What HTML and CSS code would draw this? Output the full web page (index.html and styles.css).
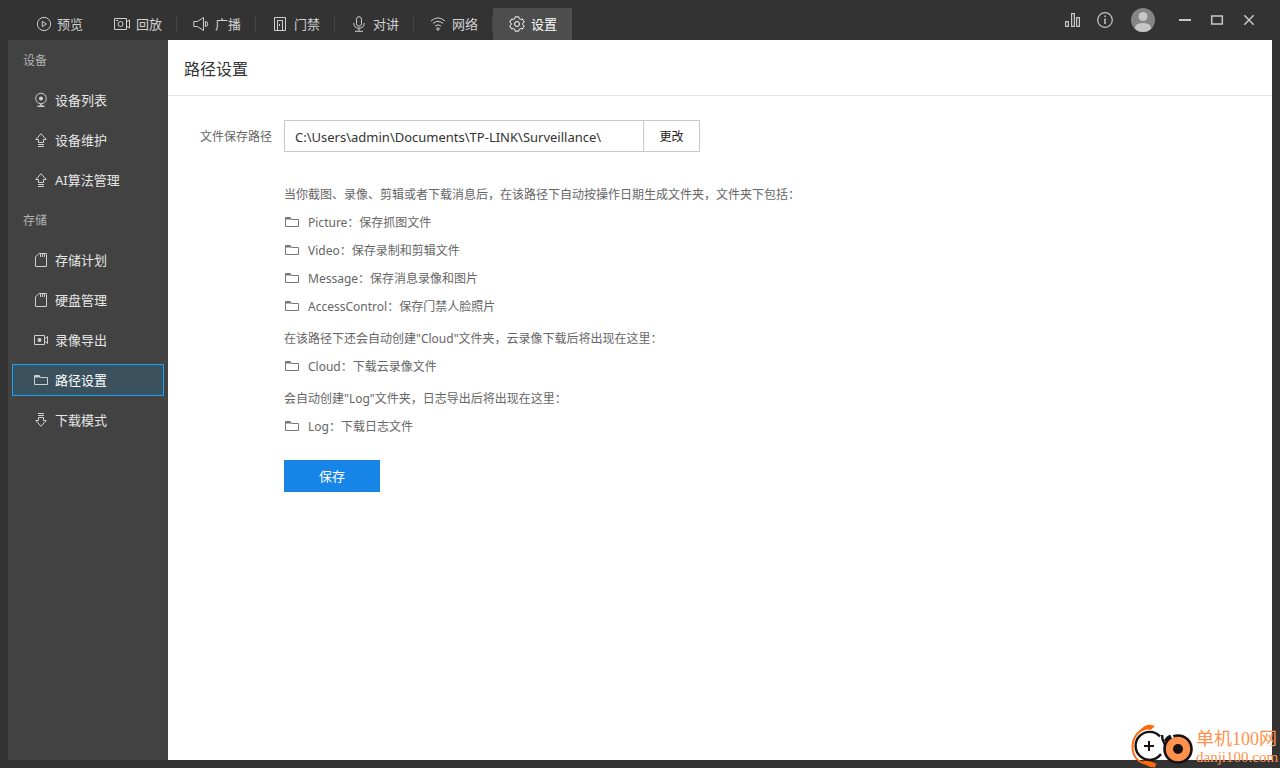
FILE: index.html
```html
<!DOCTYPE html>
<html lang="zh-CN">
<head>
<meta charset="utf-8">
<title>路径设置</title>
<link rel="stylesheet" href="styles.css">
</head>
<body>
<svg class="sprite" aria-hidden="true">
  <symbol id="folder" viewBox="0 0 16 16"><path d="M1.5 4V12.5H14.5V5.5H7.5L6 3.5H1.5Z"/><path d="M1.5 4.5H7" stroke-width="2"/></symbol>
  <symbol id="upgrade" viewBox="0 0 16 16"><path d="M8 1.7L13.2 7.5H10.5V10.5H5.5V7.5H2.8ZM5 12.5H11M5 14.5H11"/></symbol>
  <symbol id="card" viewBox="0 0 16 16"><path d="M6 1.5H13.5V14.5H2.5V5ZM7.5 2V5M9.5 2V5M11.5 2V5"/></symbol>
</svg>
<div class="app">
  <header class="topbar">
    <nav class="tabs">
      <a class="tab plain" href="#"><svg class="icon" viewBox="0 0 16 16"><circle cx="9" cy="8" r="6.6"/><path d="M7.3 5.3L11.3 8L7.3 10.7Z"/></svg>预览</a>
      <a class="tab" href="#"><svg class="icon" viewBox="0 0 16 16"><path d="M.5 2.5H12.5V13.5H.5ZM12.5 6L15.5 4V12L12.5 10M2 4.5H4"/><circle cx="6.5" cy="8" r="2.5"/></svg>回放</a>
      <a class="tab" href="#"><svg class="icon" viewBox="0 0 16 16"><path d="M.8 5.5H4.5L10.5 1.5V14.5L4.5 10.5H.8ZM12.5 5.5Q14.8 5.8 14.8 8T12.5 10.5Z"/></svg>广播</a>
      <a class="tab" href="#"><svg class="icon" viewBox="0 0 16 16"><path d="M2.5 1.5H13.5V14.5H2.5ZM5.5 14V4.5H10.5V14M7.5 8V10"/></svg>门禁</a>
      <a class="tab" href="#"><svg class="icon" viewBox="0 0 16 16"><rect x="5.5" y=".7" width="5" height="9.5" rx="2.5"/><path d="M2.8 7Q2.8 12.2 8 12.2T13.2 7M8 12V15M4 15.3H12"/></svg>对讲</a>
      <a class="tab" href="#"><svg class="icon" viewBox="0 0 16 16"><path d="M1 5Q8-1.2 15 5M3 7.5Q8 3.2 13 7.5M5 10Q8 7.5 11 10"/><circle cx="8" cy="13" r="1.2"/></svg>网络</a>
      <a class="tab active" href="#" aria-current="page"><svg class="icon" viewBox="0 0 16 16"><path d="M6.3 .8H9.7L10.4 2.8L11.4 3.4L13.4 3L15.2 5.9L13.8 7.4V8.6L15.2 10.1L13.4 13L11.4 12.6L10.4 13.2L9.7 15.2H6.3L5.6 13.2L4.6 12.6L2.6 13L.8 10.1L2.2 8.6V7.4L.8 5.9L2.6 3L4.6 3.4L5.6 2.8Z" stroke-linejoin="round"/><circle cx="8" cy="8" r="2.5"/></svg>设置</a>
    </nav>
    <div class="tools">
      <button class="tool" aria-label="统计"><svg class="icon" viewBox="0 0 16 16"><path d="M.6 9.6H3.4V14.4H.6ZM6.6 1.6H9.4V14.4H6.6ZM11.6 5.6H14.4V14.4H11.6Z" stroke-width="1.2"/></svg></button>
      <button class="tool" aria-label="信息"><svg class="icon" viewBox="0 0 16 16"><circle cx="8" cy="8" r="7.3" stroke-width="1.2"/><path d="M8 6.5V12M8 3.5V5" stroke-width="1.5"/></svg></button>
      <button class="tool user" aria-label="用户"><svg class="avatar" viewBox="0 0 24 24"><circle cx="12" cy="12" r="12" fill="#858585"/><circle cx="12" cy="8.5" r="4.5" fill="#c6c6c6"/><path d="M3.5 20.4Q5 15 12 15T20.5 20.4A12 12 0 0 1 3.5 20.4Z" fill="#c6c6c6"/></svg></button>
      <button class="tool" aria-label="最小化"><svg class="icon" viewBox="0 0 16 16"><path d="M2 8H14" stroke-width="2"/></svg></button>
      <button class="tool" aria-label="最大化"><svg class="icon" viewBox="0 0 16 16"><path d="M2.7 4H13.3V12H2.7Z" stroke-width="1.5"/></svg></button>
      <button class="tool" aria-label="关闭"><svg class="icon" viewBox="0 0 16 16"><path d="M3.3 3.3L12.7 12.7M12.7 3.3L3.3 12.7" stroke-width="1.5"/></svg></button>
    </div>
  </header>
  <div class="body">
    <nav class="sidebar">
      <h2 class="group">设备</h2>
      <a class="item" href="#"><svg class="icon" viewBox="0 0 16 16"><circle cx="8" cy="6.5" r="5.3"/><circle cx="8" cy="6.5" r="2" fill="currentColor" stroke="none"/><path d="M8 12V14M4.5 14.3H11.5" stroke-width="1.5"/></svg>设备列表</a>
      <a class="item" href="#"><svg class="icon"><use href="#upgrade"/></svg>设备维护</a>
      <a class="item" href="#"><svg class="icon"><use href="#upgrade"/></svg>AI算法管理</a>
      <h2 class="group">存储</h2>
      <a class="item" href="#"><svg class="icon"><use href="#card"/></svg>存储计划</a>
      <a class="item" href="#"><svg class="icon"><use href="#card"/></svg>硬盘管理</a>
      <a class="item" href="#"><svg class="icon" viewBox="0 0 16 16"><path d="M1.5 3.5H11.5V12.5H1.5ZM11.5 7L14.5 4.5V11.5L11.5 9"/><circle cx="6.5" cy="8" r="2" fill="currentColor" stroke="none"/></svg>录像导出</a>
      <a class="item active" href="#" aria-current="page"><svg class="icon"><use href="#folder"/></svg>路径设置</a>
      <a class="item" href="#"><svg class="icon" viewBox="0 0 16 16"><path d="M5 1.5H11M5 3.5H11M5.5 5.5H10.5V8.5H13.2L8 14.3L2.8 8.5H5.5Z"/></svg>下载模式</a>
    </nav>
    <main class="content">
      <h1 class="title">路径设置</h1>
      <form class="form">
        <label class="label" for="path">文件保存路径</label>
        <div class="path">
          <input class="field" id="path" type="text" value="C:\Users\admin\Documents\TP-LINK\Surveillance\">
          <button class="change" type="button">更改</button>
        </div>
        <div class="notes">
          <section>
            <p>当你截图、录像、剪辑或者下载消息后，在该路径下自动按操作日期生成文件夹，文件夹下包括：</p>
            <ul>
              <li><svg class="icon"><use href="#folder"/></svg>Picture：保存抓图文件</li>
              <li><svg class="icon"><use href="#folder"/></svg>Video：保存录制和剪辑文件</li>
              <li><svg class="icon"><use href="#folder"/></svg>Message：保存消息录像和图片</li>
              <li><svg class="icon"><use href="#folder"/></svg>AccessControl：保存门禁人脸照片</li>
            </ul>
          </section>
          <section>
            <p>在该路径下还会自动创建"Cloud"文件夹，云录像下载后将出现在这里：</p>
            <ul><li><svg class="icon"><use href="#folder"/></svg>Cloud：下载云录像文件</li></ul>
          </section>
          <section>
            <p>会自动创建"Log"文件夹，日志导出后将出现在这里：</p>
            <ul><li><svg class="icon"><use href="#folder"/></svg>Log：下载日志文件</li></ul>
          </section>
        </div>
        <button class="save" type="button">保存</button>
      </form>
    </main>
  </div>
</div>
<div class="watermark">
  <svg class="mark" viewBox="0 0 64 44" fill="none">
    <path d="M24 3C16-1 12 6 9 8C1 15 1 27 6 34C12 42 18 38 25 43" stroke="#ff6a0a" stroke-width="2"/>
    <path d="M12 5Q18-1 23 3L21 6Q16 4 9 9ZM12 37Q18 36 27 40Q23 45 18 42Z" fill="#ff6a0a"/>
    <circle cx="19" cy="22" r="14" fill="#fff"/>
    <path d="M30 12.5A14 14 0 1 0 31 30" stroke="#161214" stroke-width="2.4"/>
    <path d="M19 17V27M14 22H24" stroke="#161214" stroke-width="2"/>
    <path d="M32 11Q32 16 35 21M35 17Q37 13 41 11.5" stroke="#161214" stroke-width="2.4"/>
    <circle cx="48" cy="25" r="13.5" fill="#ff914d" stroke="#161214" stroke-width="2.6"/>
    <circle cx="48" cy="25" r="5" fill="#161214"/>
    <path d="M41 10L43 14" stroke="#fff" stroke-width="2"/>
  </svg>
  <div class="brand"><span class="brand-name">单机100网</span><span class="brand-site">danji100.com</span></div>
</div>
</body>
</html>
```
FILE: styles.css
```css
* {
  box-sizing: border-box;
}

body {
  margin: 0;
  background: #333;
  color: #333;
  font: 13px/20px "Noto Sans", "Noto Sans CJK SC", sans-serif;
}

a {
  color: inherit;
  text-decoration: none;
}

button,
input {
  font: inherit;
}

h1, h2, p, ul {
  margin: 0;
  padding: 0;
  font-weight: 400;
}

.sprite {
  display: none;
}

.icon {
  flex: none;
  width: 16px;
  height: 16px;
  fill: none;
  stroke: currentColor;
}

.app {
  display: flex;
  flex-direction: column;
  min-height: 100vh;
  padding: 0 8px 8px;
}

.topbar {
  display: flex;
  justify-content: space-between;
  height: 40px;
  color: #d0d0d0;
}

.tabs {
  display: flex;
  padding: 8px 0 0 11px;
}

.tab {
  display: flex;
  align-items: center;
  gap: 6px;
  padding: 0 15px 0 16px;
  background: linear-gradient(#444, #444) right center / 1px 16px no-repeat;
  white-space: nowrap;
}

.tab.plain {
  background: none;
}

.tab.active {
  background: #4d4d4d;
  color: #fff;
}

.tools {
  display: flex;
  align-items: center;
  padding-right: 7px;
}

.tool {
  display: flex;
  align-items: center;
  justify-content: center;
  width: 32px;
  height: 32px;
  padding: 0;
  border: 0;
  background: none;
  color: #c8c8c8;
}

.tool.user {
  width: 48px;
  padding-right: 4px;
}

.avatar {
  width: 24px;
  height: 24px;
}

.body {
  display: flex;
  flex: 1;
}

.sidebar {
  flex: none;
  width: 160px;
  padding: 0 4px;
  background: #424242;
  color: #e6e6e6;
}

.sidebar .icon {
  color: #d0d0d0;
}

.group {
  padding: 2px 0 0 11px;
  color: #b3b3b3;
  font-size: 12px;
  line-height: 38px;
}

.item {
  display: flex;
  align-items: center;
  gap: 6px;
  height: 32px;
  margin: 4px 0 8px;
  padding-left: 20px;
  border: 1px solid transparent;
}

.item + .group {
  margin-top: -4px;
}

.item.active {
  border-color: #12a5f4;
  background: #3b515d;
  color: #fff;
}

.content {
  flex: 1;
  background: #fff;
}

.title {
  padding: 4px 16px 0;
  border-bottom: 1px solid #e6e6e6;
  font-size: 16px;
  line-height: 51px;
}

.form {
  display: grid;
  grid-template-columns: auto 1fr;
  column-gap: 12px;
  align-items: center;
  padding: 24px 32px;
}

.label {
  padding-top: 2px;
  color: #666;
  font-size: 12px;
}

.path {
  display: flex;
  height: 32px;
}

.field {
  width: 360px;
  padding: 2px 10px 0;
  border: 1px solid #c8c8c8;
  border-radius: 0;
  background: #fff;
  color: #333;
}

.change {
  width: 57px;
  margin-left: -1px;
  padding: 2px 0 0;
  border: 1px solid #c8c8c8;
  background: #fff;
  color: #222;
  font-size: 12px;
}

.notes {
  display: grid;
  grid-column: 2;
  gap: 4px;
  margin: 29px 0 19px;
  color: #666;
  font-size: 12px;
  line-height: 28px;
}

.notes li {
  display: flex;
  align-items: center;
  gap: 8px;
}

.notes .icon {
  margin-bottom: 2px;
  color: #777;
}

.save {
  grid-column: 2;
  width: 96px;
  height: 32px;
  padding: 0;
  border: 0;
  background: #1785e8;
  color: #fff;
}

.watermark {
  position: absolute;
  right: 4px;
  bottom: 0;
  display: flex;
  align-items: center;
  gap: 2px;
  color: #ff914d;
}

.mark {
  width: 64px;
  height: 44px;
}

.brand {
  display: flex;
  flex-direction: column;
  width: 80px;
  padding-top: 2px;
  font-family: "Liberation Serif", "Noto Sans CJK SC", serif;
  white-space: nowrap;
}

.brand-name {
  font-size: 18px;
  line-height: 20px;
}

.brand-site {
  font-size: 15px;
  line-height: 16px;
}
```
